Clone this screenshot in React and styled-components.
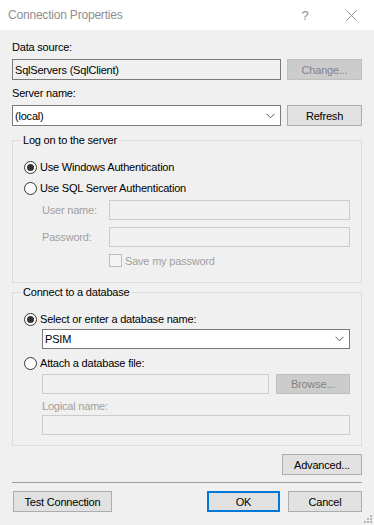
import React from 'react';
import styled, { createGlobalStyle } from 'styled-components';

const GlobalStyle = createGlobalStyle`
	html, body {
		margin: 0;
		padding: 0;
		background: #f0f0f0;
	}
	* {
		box-sizing: border-box;
	}
`;

const Window = styled.div`
	position: relative;
	width: 374px;
	height: 525px;
	background: #f0f0f0;
	font-family: 'Liberation Sans', Arial, sans-serif;
	font-size: 11px;
	letter-spacing: -0.2px;
	color: #000;
	display: flex;
	flex-direction: column;
	overflow: hidden;
`;

const TitleBar = styled.div`
	height: 30px;
	background: #fff;
	display: flex;
	align-items: center;
	padding-left: 8px;
	flex-shrink: 0;
`;

const Title = styled.div`
	flex: 1;
	font-size: 12px;
	color: #8f8f8f;
	padding-bottom: 1px;
`;

const TitleButton = styled.div`
	width: 46px;
	height: 30px;
	display: flex;
	align-items: center;
	justify-content: center;
	color: #8f8f8f;
	font-size: 13px;
`;

const Content = styled.div`
	display: flex;
	flex-direction: column;
	padding: 10px 12px 0 12px;
`;

const Label = styled.div`
	line-height: 14px;
	height: 14px;
	margin-top: ${(p) => p.$mt || 0}px;
	color: ${(p) => (p.$disabled ? '#a0a0a0' : '#000')};
	white-space: nowrap;
`;

const Row = styled.div`
	display: flex;
	align-items: center;
	gap: ${(p) => p.$gap || 6}px;
	margin-top: ${(p) => p.$mt || 0}px;
	margin-left: ${(p) => p.$ml || 0}px;
`;

const TextBox = styled.div`
	flex: ${(p) => (p.$w ? `0 0 ${p.$w}px` : '1')};
	height: ${(p) => p.$h || 21}px;
	border: 1px solid ${(p) => (p.$disabled ? '#cccccc' : '#7a7a7a')};
	background: ${(p) => (p.$filled ? '#fff' : '#f0f0f0')};
	display: flex;
	align-items: center;
	padding: 0 3px 0 2px;
	white-space: nowrap;
	line-height: 14px;
`;

const BoxText = styled.span`
	flex: 1;
`;

const Chevron = styled.svg`
	width: 9px;
	height: 6px;
	margin-right: 2px;
`;

const Button = styled.div`
	flex: 0 0 ${(p) => p.$w || 75}px;
	height: ${(p) => p.$h || 21}px;
	background: ${(p) => (p.$disabled ? '#cccccc' : '#e1e1e1')};
	border: ${(p) => (p.$default ? '2px solid #0078d7' : `1px solid ${p.$disabled ? '#bfbfbf' : '#adadad'}`)};
	color: ${(p) => (p.$disabled ? '#838383' : '#000')};
	display: flex;
	align-items: center;
	justify-content: center;
	white-space: nowrap;
	margin-left: ${(p) => p.$ml || 0}px;
`;

const Group = styled.fieldset`
	margin: ${(p) => p.$mt || 0}px 0 0 0;
	padding: ${(p) => p.$pt || 10}px 11px ${(p) => p.$pb || 10}px 11px;
	border: 1px solid #dcdcdc;
	border-radius: 0;
	min-width: 0;
`;

const Legend = styled.legend`
	padding: 0 2px;
	margin-left: -3px;
	line-height: 14px;
	height: 14px;
`;

const RadioRow = styled.div`
	display: flex;
	align-items: center;
	height: 20px;
	gap: 3px;
	margin-top: ${(p) => p.$mt || 0}px;
	white-space: nowrap;
`;

const RadioCircle = styled.span`
	width: 13px;
	height: 13px;
	border-radius: 50%;
	border: 1px solid #333;
	background: #fff;
	display: flex;
	align-items: center;
	justify-content: center;

	&::after {
		content: '';
		width: 7px;
		height: 7px;
		border-radius: 50%;
		background: ${(p) => (p.$checked ? '#333' : 'transparent')};
	}
`;

const CredGrid = styled.div`
	display: grid;
	grid-template-columns: 67px 1fr;
	margin-left: 18px;
	margin-top: 2px;
	row-gap: 7px;
	align-items: center;
`;

const CheckRow = styled.div`
	grid-column: 2;
	display: flex;
	align-items: center;
	gap: 3px;
	height: 15px;
	margin-top: -1px;
	color: #a0a0a0;
	white-space: nowrap;
`;

const CheckBox = styled.span`
	width: 13px;
	height: 13px;
	border: 1px solid #bcbcbc;
	background: #f4f4f4;
`;

const Indented = styled.div`
	margin-left: 18px;
	display: flex;
	flex-direction: column;
`;

const Separator = styled.div`
	height: 1px;
	background: #a0a0a0;
	margin-top: 7px;
`;

const FooterRow = styled.div`
	display: flex;
	align-items: center;
	margin-top: 8px;
`;

const Spacer = styled.div`
	flex: 1;
`;

const Grip = styled.svg`
	position: absolute;
	right: 2px;
	bottom: 2px;
	width: 8px;
	height: 8px;
`;

const ComboArrow = () => (
	<Chevron viewBox="0 0 9 6">
		<path d="M0.5 0.8 L4.5 4.8 L8.5 0.8" fill="none" stroke="#555" strokeWidth="1" />
	</Chevron>
);

const Combo = ({ value, w, h }) => (
	<TextBox $filled $w={w} $h={h}>
		<BoxText>{value}</BoxText>
		<ComboArrow />
	</TextBox>
);

const Radio = ({ checked, children, mt }) => (
	<RadioRow $mt={mt}>
		<RadioCircle $checked={checked} />
		{children}
	</RadioRow>
);

export default function App() {
	return (
		<>
			<GlobalStyle />
			<Window>
				<TitleBar>
					<Title>Connection Properties</Title>
					<TitleButton>?</TitleButton>
					<TitleButton>
						<svg width="11" height="11" viewBox="0 0 11 11">
							<path d="M0.5 0.5 L10.5 10.5 M10.5 0.5 L0.5 10.5" stroke="#8f8f8f" strokeWidth="1" />
						</svg>
					</TitleButton>
				</TitleBar>
				<Content>
					<Label>Data source:</Label>
					<Row $mt={5}>
						<TextBox>SqlServers (SqlClient)</TextBox>
						<Button $disabled>Change...</Button>
					</Row>
					<Label $mt={6}>Server name:</Label>
					<Row $mt={5}>
						<Combo value="(local)" />
						<Button>Refresh</Button>
					</Row>

					<Group $mt={7} $pt={10} $pb={14}>
						<Legend>Log on to the server</Legend>
						<Radio checked>Use Windows Authentication</Radio>
						<Radio mt={1}>Use SQL Server Authentication</Radio>
						<CredGrid>
							<Label $disabled>User name:</Label>
							<TextBox $disabled $h={20} />
							<Label $disabled>Password:</Label>
							<TextBox $disabled $h={20} />
							<CheckRow>
								<CheckBox />
								Save my password
							</CheckRow>
						</CredGrid>
					</Group>

					<Group $mt={2} $pt={10} $pb={10}>
						<Legend>Connect to a database</Legend>
						<Radio checked>Select or enter a database name:</Radio>
						<Indented>
							<Row>
								<Combo value="PSIM" h={20} />
							</Row>
						</Indented>
						<Radio mt={4}>Attach a database file:</Radio>
						<Indented>
							<Row $mt={1} $gap={7}>
								<TextBox $disabled $h={20} />
								<Button $disabled $w={74} $h={20}>Browse...</Button>
							</Row>
							<Label $disabled $mt={5}>Logical name:</Label>
							<Row $mt={2}>
								<TextBox $disabled $h={20} />
							</Row>
						</Indented>
					</Group>

					<Row $mt={8}>
						<Spacer />
						<Button $w={80}>Advanced...</Button>
					</Row>
					<Separator />
					<FooterRow>
						<Button $w={99} $ml={1}>Test Connection</Button>
						<Spacer />
						<Button $w={73} $default>OK</Button>
						<Button $w={74} $ml={8}>Cancel</Button>
					</FooterRow>
				</Content>
				<Grip viewBox="0 0 8 8">
					<rect x="6" y="0" width="2" height="2" fill="#b8b8b8" />
					<rect x="3" y="3" width="2" height="2" fill="#b8b8b8" />
					<rect x="6" y="3" width="2" height="2" fill="#b8b8b8" />
					<rect x="0" y="6" width="2" height="2" fill="#b8b8b8" />
					<rect x="3" y="6" width="2" height="2" fill="#b8b8b8" />
					<rect x="6" y="6" width="2" height="2" fill="#b8b8b8" />
				</Grip>
			</Window>
		</>
	);
}
